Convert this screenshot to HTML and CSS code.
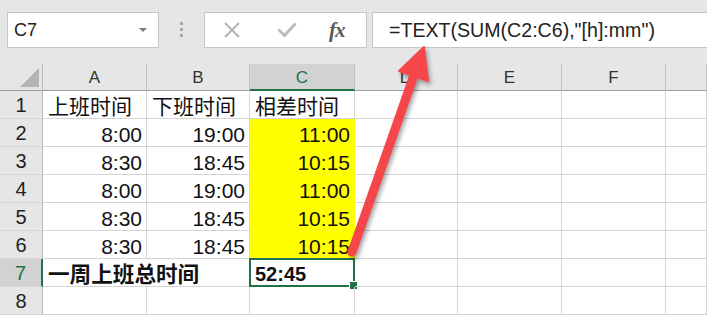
FILE: index.html
```html
<!DOCTYPE html>
<html lang="zh-CN">
<head>
  <meta charset="UTF-8">
  <title>一周上班总时间</title>
  <link rel="stylesheet" href="styles.css">
</head>
<body>
  <div class="ribbon">
    <div class="namebox">
      <span>C7</span>
      <span class="caret"></span>
    </div>
    <div class="grip"><i></i><i></i><i></i></div>
    <div class="fxbox">
      <svg class="ico-x" width="16" height="16" viewBox="0 0 16 16">
        <path d="M1 1 L15 15 M15 1 L1 15" stroke="#b3b3b3" stroke-width="2" fill="none"/>
      </svg>
      <svg class="ico-ok" width="20" height="16" viewBox="0 0 20 16">
        <path d="M1.5 7.5 L7.5 13.5 L18.5 1.5" stroke="#bcbcbc" stroke-width="3" fill="none"/>
      </svg>
      <span class="fx">fx</span>
    </div>
    <div class="formula">=TEXT(SUM(C2:C6),"[h]:mm")</div>
  </div>

  <div class="sheet">
    <div class="hd corner"><span class="tri"></span></div>
    <div class="hd col">A</div>
    <div class="hd col">B</div>
    <div class="hd col active">C</div>
    <div class="hd col">D</div>
    <div class="hd col">E</div>
    <div class="hd col">F</div>
    <div class="hd col"></div>

    <div class="hd row">1</div>
    <div class="cell">上班时间</div>
    <div class="cell">下班时间</div>
    <div class="cell">相差时间</div>
    <div class="cell"></div><div class="cell"></div><div class="cell"></div><div class="cell"></div>

    <div class="hd row">2</div>
    <div class="cell num">8:00</div>
    <div class="cell num">19:00</div>
    <div class="cell num fill">11:00</div>
    <div class="cell"></div><div class="cell"></div><div class="cell"></div><div class="cell"></div>

    <div class="hd row">3</div>
    <div class="cell num">8:30</div>
    <div class="cell num">18:45</div>
    <div class="cell num fill">10:15</div>
    <div class="cell"></div><div class="cell"></div><div class="cell"></div><div class="cell"></div>

    <div class="hd row">4</div>
    <div class="cell num">8:00</div>
    <div class="cell num">19:00</div>
    <div class="cell num fill">11:00</div>
    <div class="cell"></div><div class="cell"></div><div class="cell"></div><div class="cell"></div>

    <div class="hd row">5</div>
    <div class="cell num">8:30</div>
    <div class="cell num">18:45</div>
    <div class="cell num fill">10:15</div>
    <div class="cell"></div><div class="cell"></div><div class="cell"></div><div class="cell"></div>

    <div class="hd row">6</div>
    <div class="cell num">8:30</div>
    <div class="cell num">18:45</div>
    <div class="cell num fill last">10:15</div>
    <div class="cell"></div><div class="cell"></div><div class="cell"></div><div class="cell"></div>

    <div class="hd row active">7</div>
    <div class="cell bold span2">一周上班总时间</div>
    <div class="cell bold selected">52:45<span class="handle"></span></div>
    <div class="cell"></div><div class="cell"></div><div class="cell"></div><div class="cell"></div>

    <div class="hd row">8</div>
    <div class="cell"></div><div class="cell"></div><div class="cell"></div>
    <div class="cell"></div><div class="cell"></div><div class="cell"></div><div class="cell"></div>
  </div>

  <svg class="arrow" width="707" height="315" viewBox="0 0 707 315">
    <g fill="#f5474a" stroke="#f5474a">
      <line x1="352" y1="252" x2="413" y2="78" stroke-width="9" stroke-linecap="round"/>
      <polygon points="424,47 399,71 428,81" stroke-width="2" stroke-linejoin="round"/>
    </g>
  </svg>
</body>
</html>
```

FILE: styles.css
```css
body {
  margin: 0;
  width: 707px;
  height: 315px;
  overflow: hidden;
  position: relative;
  background: #fff;
  font-family: "Liberation Sans", "Noto Sans CJK SC", sans-serif;
  color: #111;
}

.ribbon {
  height: 64px;
  background: #e6e6e6;
  display: flex;
  align-items: flex-start;
  padding-top: 12px;
  box-sizing: border-box;
}

.namebox {
  margin-left: 7px;
  width: 152px;
  height: 36px;
  box-sizing: border-box;
  background: #fff;
  border: 1px solid #c6c6c6;
  display: flex;
  align-items: center;
  justify-content: space-between;
  padding: 0 11px 0 6px;
  font-size: 18px;
  color: #222;
}

.caret {
  width: 0;
  height: 0;
  border-left: 4px solid transparent;
  border-right: 4px solid transparent;
  border-top: 4px solid #7a7a7a;
}

.grip {
  width: 45px;
  display: flex;
  flex-direction: column;
  align-items: center;
  gap: 3px;
  padding-top: 10px;
}

.grip i {
  width: 3px;
  height: 3px;
  background: #a8a8a8;
}

.fxbox {
  width: 163px;
  height: 36px;
  box-sizing: border-box;
  background: #fff;
  border: 1px solid #c6c6c6;
  display: flex;
  align-items: center;
}

.ico-x {
  margin-left: 19px;
}

.ico-ok {
  margin-left: 37px;
}

.fx {
  margin-left: 32px;
  font-family: "Liberation Serif", serif;
  font-style: italic;
  font-weight: bold;
  font-size: 21px;
  color: #5a5a5a;
  letter-spacing: -1px;
}

.formula {
  margin-left: 5px;
  flex: 1;
  height: 36px;
  box-sizing: border-box;
  background: #fff;
  border: 1px solid #c6c6c6;
  border-right: none;
  display: flex;
  align-items: center;
  padding-left: 16px;
  font-size: 19.6px;
  color: #222;
  white-space: nowrap;
}

.sheet {
  display: grid;
  grid-template-columns: 43px 104px 103px 105px 103px 104px 104px 41px;
  grid-template-rows: 27px repeat(8, 28px);
}

.hd {
  background: #e6e6e6;
  box-sizing: border-box;
  display: flex;
  align-items: center;
  justify-content: center;
  color: #333;
}

.corner {
  border-right: 1px solid #b8b8b8;
  border-bottom: 1px solid #9e9e9e;
  position: relative;
}

.tri {
  position: absolute;
  left: 20px;
  bottom: 3px;
  width: 0;
  height: 0;
  border-left: 19px solid transparent;
  border-bottom: 19px solid #b4b4b4;
}

.col {
  border-right: 1px solid #c2c2c2;
  border-bottom: 1px solid #9e9e9e;
  font-size: 17px;
  padding-top: 2px;
}

.col.active {
  background: #d2d2d2;
  color: #217346;
  border-bottom: 2px solid #217346;
}

.row {
  border-right: 1px solid #b8b8b8;
  border-bottom: 1px solid #d4d4d4;
  font-size: 20px;
  color: #222;
  padding-top: 2px;
}

.row.active {
  background: #d2d2d2;
  color: #217346;
  border-right: 2px solid #217346;
}

.cell {
  box-sizing: border-box;
  border-right: 1px solid #d4d4d4;
  border-bottom: 1px solid #d4d4d4;
  display: flex;
  align-items: flex-end;
  padding: 0 4px 0 5px;
  font-size: 21px;
  line-height: 22px;
  white-space: nowrap;
  position: relative;
}

.num {
  justify-content: flex-end;
}

.fill {
  background: #ffff00;
  border-color: #ffff00;
}

.fill.last {
  border-bottom-color: #d4d4d4;
}

.bold {
  font-weight: bold;
}

.span2 {
  grid-column: span 2;
  font-size: 21.6px;
}

.selected {
  border: 2px solid #217346;
  margin: -1px 0 0 -1px;
  padding-left: 4px;
  font-size: 20px;
}

.handle {
  position: absolute;
  right: -5px;
  bottom: -5px;
  width: 7px;
  height: 7px;
  background: #217346;
  border: 1px solid #fff;
}

.arrow {
  position: absolute;
  left: 0;
  top: 0;
  filter: drop-shadow(2px 3px 2px rgba(0, 0, 0, 0.35));
  pointer-events: none;
}
```
